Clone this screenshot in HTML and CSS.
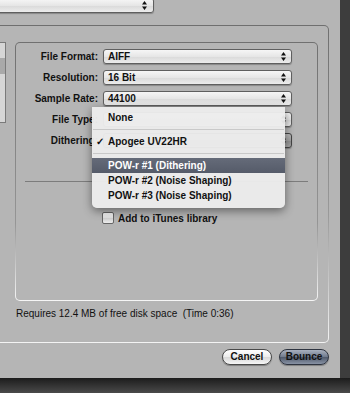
FILE: index.html
```html
<!doctype html>
<html>
<head>
  <title>Bounce</title>
  <link rel="stylesheet" href="styles.css">
</head>
<body>
  <div class="screen">
    <div class="window">
      <div class="top-popup">
        <svg class="arrows" width="5" height="9" viewBox="0 0 5 9"><path d="M2.5 0L5 3.5H0z M2.5 9L5 5.5H0z"/></svg>
      </div>

      <div class="outer-box">
        <div class="outer-inner">
          <div class="group-row">
            <div class="list-box">
              <div class="list-row"></div>
              <div class="list-row selected"></div>
            </div>
            <div class="group-edge">
              <div class="group">
                <div class="form">
                  <span class="label">File Format:</span>
                  <div class="popup"><span class="value">AIFF</span>
                    <svg class="arrows" width="5" height="9" viewBox="0 0 5 9"><path d="M2.5 0L5 3.5H0z M2.5 9L5 5.5H0z"/></svg>
                  </div>
                  <span class="label">Resolution:</span>
                  <div class="popup"><span class="value">16 Bit</span>
                    <svg class="arrows" width="5" height="9" viewBox="0 0 5 9"><path d="M2.5 0L5 3.5H0z M2.5 9L5 5.5H0z"/></svg>
                  </div>
                  <span class="label">Sample Rate:</span>
                  <div class="popup"><span class="value">44100</span>
                    <svg class="arrows" width="5" height="9" viewBox="0 0 5 9"><path d="M2.5 0L5 3.5H0z M2.5 9L5 5.5H0z"/></svg>
                  </div>
                  <span class="label">File Type:</span>
                  <div class="popup"><span class="value"></span>
                    <svg class="arrows" width="5" height="9" viewBox="0 0 5 9"><path d="M2.5 0L5 3.5H0z M2.5 9L5 5.5H0z"/></svg>
                  </div>
                  <span class="label">Dithering:</span>
                  <div class="popup pressed"><span class="value"></span>
                    <svg class="arrows" width="5" height="9" viewBox="0 0 5 9"><path d="M2.5 0L5 3.5H0z M2.5 9L5 5.5H0z"/></svg>
                  </div>
                </div>
                <div class="rule"></div>
                <div class="check-row">
                  <span class="checkbox"></span>
                  <span>Add to iTunes library</span>
                </div>
              </div>
            </div>
          </div>
          <p class="disk">Requires 12.4 MB of free disk space&nbsp; (Time 0:36)</p>
        </div>
      </div>

      <div class="buttons">
        <span class="button">Cancel</span>
        <span class="button default">Bounce</span>
      </div>

      <div class="menu">
        <div class="item"><span class="check"></span>None</div>
        <div class="sep"></div>
        <div class="item"><span class="check">&#10003;</span>Apogee UV22HR</div>
        <div class="sep"></div>
        <div class="item active"><span class="check"></span>POW-r #1 (Dithering)</div>
        <div class="item"><span class="check"></span>POW-r #2 (Noise Shaping)</div>
        <div class="item"><span class="check"></span>POW-r #3 (Noise Shaping)</div>
      </div>
    </div>
    <div class="shade-right"></div>
    <div class="shade-bottom"></div>
  </div>
</body>
</html>
```

FILE: styles.css
```css
body {
  margin: 0;
  background: #3c3c3c;
  font-family: "Liberation Sans", Arial, sans-serif;
  font-size: 10px;
  color: #111;
}
.screen {
  display: grid;
  grid-template-columns: 340px 10px;
  grid-template-rows: 378px 15px;
  width: 350px;
  height: 393px;
  overflow: hidden;
}
.window {
  position: relative;
  background: #b5b5b5;
  overflow: hidden;
}
.shade-right { background: #3d3d3d; }
.shade-bottom {
  grid-column: 1 / span 2;
  background: linear-gradient(#1c1c1c, #4a4a4a);
}

/* popups */
.top-popup, .popup {
  display: flex;
  align-items: center;
  box-sizing: border-box;
  border: 1px solid #5f5f5f;
  border-radius: 3px;
  background: linear-gradient(#f6f6f6, #e6e6e6 50%, #d9d9d9 51%, #ececec);
  box-shadow: 0 1px 1px rgba(0, 0, 0, 0.25);
}
.top-popup {
  width: 174px;
  height: 15px;
  margin: -2px 0 0 -20px;
  justify-content: flex-end;
  padding-right: 6px;
}
.popup {
  height: 15px;
  padding: 0 5px 0 4px;
  font-weight: bold;
}
.popup .value { flex: 1; }
.popup.pressed {
  background: linear-gradient(#b9b9b9, #a2a2a2 50%, #8f8f8f 51%, #a8a8a8);
  border-color: #444;
}
.arrows { fill: #111; display: block; }

/* group boxes */
.outer-box {
  margin: 12px 0 0 -10px;
  width: 339px;
  height: 318px;
  box-sizing: border-box;
  padding: 1px;
  border-radius: 5px;
  background: linear-gradient(#6f6f6f, #9a9a9a 60%, #f4f4f4);
}
.outer-inner {
  height: 100%;
  box-sizing: border-box;
  padding-top: 16px;
  border-radius: 4px;
  background: #b5b5b5;
}
.group-row { display: flex; }
.list-box {
  width: 15px;
  height: 81px;
  box-sizing: border-box;
  border: 1px solid #7a7a7a;
  border-left: 0;
  background: #d6d6d6;
}
.list-row { height: 15px; }
.list-row.selected { height: 16px; background: #a9a9a9; }
.group-edge {
  margin-left: 9px;
  width: 303px;
  height: 259px;
  box-sizing: border-box;
  padding: 1px;
  border-radius: 5px;
  background: linear-gradient(#707070, #959595 70%, #f6f6f6);
}
.group {
  height: 100%;
  box-sizing: border-box;
  padding-top: 6px;
  border-radius: 4px;
  background: #b5b5b5;
}
.form {
  display: grid;
  grid-template-columns: 82px 189px;
  column-gap: 5px;
  row-gap: 6px;
}
.label {
  font-weight: bold;
  text-align: right;
  line-height: 15px;
  white-space: nowrap;
}
.rule {
  margin: 33px 0 0 9px;
  width: 283px;
  height: 1px;
  background: #7c7c7c;
}
.check-row {
  display: flex;
  align-items: center;
  gap: 4px;
  margin: 30px 0 0 86px;
  font-weight: bold;
}
.checkbox {
  width: 12px;
  height: 12px;
  box-sizing: border-box;
  border: 1px solid #666;
  border-radius: 2px;
  background: linear-gradient(#fafafa, #dedede 50%, #cfcfcf 51%, #ececec);
}
.disk {
  margin: 7px 0 0 25px;
  line-height: 12px;
}

/* buttons */
.buttons {
  display: flex;
  justify-content: flex-end;
  gap: 7px;
  margin: 6px 11px 0 0;
}
.button {
  width: 50px;
  height: 16px;
  box-sizing: border-box;
  border: 1px solid #4a4a4a;
  border-radius: 8px;
  font-weight: bold;
  line-height: 14px;
  text-align: center;
  background: linear-gradient(#ffffff, #ececec 50%, #d8d8d8 51%, #f6f6f6);
  box-shadow: 0 1px 1px rgba(0, 0, 0, 0.3);
}
.button.default {
  border-color: #2e3440;
  background: linear-gradient(#a9b1bf, #707a8c 50%, #4f596b 51%, #8892a4);
}

/* open popup menu */
.menu {
  position: absolute;
  left: 92px;
  top: 107px;
  width: 193px;
  box-sizing: border-box;
  padding: 3px 0 5px;
  border-radius: 0 0 5px 5px;
  background: rgba(236, 236, 236, 0.96);
  box-shadow: 0 3px 10px rgba(0, 0, 0, 0.45);
  font-weight: bold;
}
.item {
  display: flex;
  height: 15px;
  line-height: 15px;
  padding-left: 4px;
  white-space: nowrap;
}
.check { width: 12px; }
.item.active {
  background: linear-gradient(#656b79, #555b69);
  color: #fff;
}
.sep {
  height: 1px;
  margin: 4px 1px;
  background: #c9c9c9;
}
```
